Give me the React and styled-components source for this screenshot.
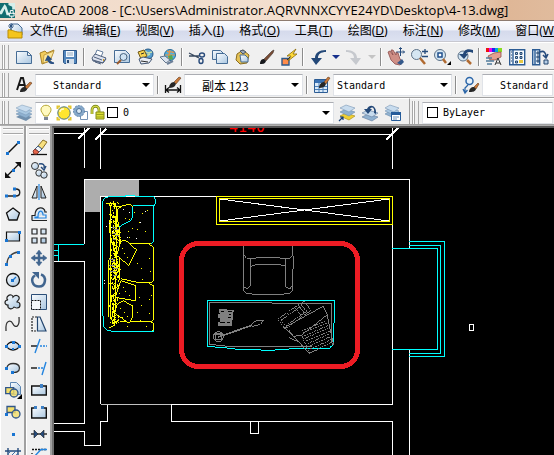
import React from "react";
import styled, { createGlobalStyle } from "styled-components";

const GlobalStyle = createGlobalStyle`
  body {
    margin: 0;
    background: #000;
  }
  * {
    box-sizing: border-box;
  }
`;

const Window = styled.div`
  display: flex;
  flex-direction: column;
  height: 100vh;
  overflow: hidden;
  background: #f0f0f0;
  color: #000;
  font-family: "Noto Sans", "Noto Sans CJK SC", sans-serif;
  font-size: 12px;
`;

const TitleBar = styled.header`
  display: flex;
  align-items: center;
  gap: 6px;
  flex: none;
  height: 21px;
  overflow: hidden;
  background: linear-gradient(90deg, #f1dccb 0%, #f3dfcf 60%, #eccfb8 84%, #dfb797 92%, #e0bb9d 100%);
  border-bottom: 1px solid #8d7b70;
`;

const Title = styled.h1`
  margin: 0;
  font-family: "Open Sans", sans-serif;
  font-size: 13px;
  font-weight: normal;
  line-height: 20px;
  white-space: nowrap;
`;

const MenuBar = styled.nav`
  display: flex;
  align-items: center;
  flex: none;
  height: 21px;
  padding-left: 7px;
  overflow: hidden;
  background: linear-gradient(#fdfdff 0%, #eef0f8 45%, #d5daec 50%, #dde2f1 100%);
  border-bottom: 1px solid #c8c8d0;
`;

const MenuButton = styled.button`
  flex: none;
  padding: 0 8px 0 7px;
  border: 0;
  background: none;
  font: inherit;
  line-height: 20px;
  color: #000;
  white-space: nowrap;
`;

const ToolBar = styled.div`
  display: flex;
  align-items: center;
  flex: ${(p) => (p.$grow ? 1 : "none")};
  width: ${(p) => (p.$width ? p.$width + "px" : "auto")};
  height: ${(p) => p.$height || 27}px;
  padding-top: 2px;
  overflow: hidden;
  border-top: 1px solid #fff;
  border-bottom: 1px solid #a0a0a0;
  border-right: ${(p) => (p.$width ? "1px solid #a0a0a0" : "0")};
`;

const ToolRow = styled.div`
  display: flex;
  flex: none;
`;

const Grip = styled.div`
  flex: none;
  width: 7px;
  height: 24px;
  margin: 0 3px 0 2px;
  border: solid #a8a8a8;
  border-width: 0 1px;
  box-shadow: inset 1px 0 #fff, inset -3px 0 #f0f0f0, inset -4px 0 #a8a8a8;
`;

const Divider = styled.div`
  flex: none;
  width: 2px;
  height: 18px;
  margin: 0 2px;
  border-left: 1px solid #8c8c8c;
  border-right: 1px solid #fff;
`;

const ToolButton = styled.button`
  display: flex;
  align-items: center;
  justify-content: center;
  flex: none;
  width: ${(p) => p.$width || 23}px;
  height: 22px;
  padding: 0;
  border: 0;
  background: none;
`;

const Icon = styled.svg`
  display: block;
  flex: none;
  width: ${(p) => p.$size || 16}px;
  height: ${(p) => p.$size || 16}px;
  overflow: visible;
`;

const Combo = styled.div`
  display: flex;
  align-items: center;
  gap: 1px;
  flex: ${(p) => (p.$width ? "none" : 1)};
  width: ${(p) => (p.$width ? p.$width + "px" : "auto")};
  min-width: 0;
  height: 22px;
  padding: 0 3px 0 ${(p) => p.$indent}px;
  margin-right: 1px;
  overflow: hidden;
  background: #fff;
  border: solid #e0e3e8;
  border-width: 1px;
  border-top-color: #abadb3;
`;

const Select = styled.select`
  appearance: none;
  flex: 1;
  min-width: 0;
  height: 20px;
  padding: 0;
  border: 0;
  outline: 0;
  background: transparent;
  color: #000;
  font-family: ${(p) => (p.$cjk ? `"Noto Sans CJK SC", sans-serif` : `"DejaVu Sans Mono", monospace`)};
  font-size: ${(p) => (p.$cjk ? 12 : 10)}px;
`;

const Arrow = styled.span`
  flex: none;
  border: solid transparent;
  border-width: 4px 4px 0;
  border-top-color: ${(p) => p.$color || "#000"};
`;

const Swatch = styled.span`
  flex: none;
  width: 11px;
  height: 11px;
  margin-right: 4px;
  border: 1px solid #000;
  background: #fff;
`;

const Workspace = styled.main`
  display: flex;
  flex: 1;
  min-height: 0;
  border-top: 1px solid #b0b0b0;
`;

const Palette = styled.div`
  display: flex;
  flex-direction: column;
  align-items: center;
  flex: none;
  width: 26px;
  overflow: hidden;
  padding-top: 2px;
  border-right: 2px solid #a0a0a0;
  border-left: 1px solid #fff;
`;

const PaletteGrip = styled.div`
  flex: none;
  width: 20px;
  height: 6px;
  margin-bottom: 3px;
  border: solid #a8a8a8;
  border-width: 1px 0;
  box-shadow: inset 0 1px #fff, 0 1px #fff;
`;

const Canvas = styled.div`
  flex: 1;
  min-width: 0;
  background: #000;
  border-left: 2px solid #707070;
  border-top: 2px solid #555;
`;

const Drawing = styled.svg`
  display: block;
  width: 100%;
  height: 100%;
`;

// 16 x 16 drawings, keyed by command
const icons = {
  app: (
    <>
      <path d="M0 0h16v16H0z" fill="#116d70" />
      <path d="M0 9 5 1l2 3 3 9H7L5 6 2 12H0zM9 0h7v7h-3V4L9 2z" fill="#d7efea" />
      <path d="M8 11h3V8h3v3h2M12.500 14v2M10 11h5v3h-5z" fill="none" stroke="#fff" />
    </>
  ),
  doc: (
    <>
      <path d="M4 1h7l4 4v7H4z" fill="url(#paper)" stroke="#456b95" />
      <path d="M1 7c4-1 7 3 14 2v6H1z" fill="#f4c51c" stroke="#b98b05" />
      <path d="M4 0v7M1 3h6M2 1l4 4M2 5l4-4" stroke="#244c7b" strokeWidth=".8" />
    </>
  ),
  new: <path d="M.5 2.500h11l4 4v8H.5zM11.500 2.500v4h4" fill="url(#paper)" stroke="#466d96" />,
  open: (
    <>
      <path d="M1 4 6 2l2 2 7-3-4 11-8 3z" fill="#f1cc5b" stroke="#a8842a" />
      <path d="M5 6 15 2l-4 10-7 2z" fill="#fbe69b" stroke="#b18b31" strokeWidth=".7" />
      <path d="M15 14c-4 1-6-1-6-4M7 11l2-4 3 3z" fill="#294f82" stroke="#294f82" strokeWidth="1.300" />
    </>
  ),
  save: (
    <>
      <path d="M1.500 1.500h13v13h-12l-1-1z" fill="#5387bd" stroke="#2c5688" />
      <path d="M4 2h8v6H4z" fill="#f5f9fd" />
      <path d="M4 10h8v5H4z" fill="#d6e0ea" />
      <path d="M5 4h6M5 6h6" stroke="#91a9c0" />
      <path d="M5 11h2v3H5z" fill="#2c4d76" />
    </>
  ),
  print: (
    <>
      <path d="m4 6 2-5 6 2-2 5z" fill="#fff" stroke="#67809f" />
      <path d="M1 9l3-4 11 4-3 5-10-2z" fill="#dde2ee" stroke="#50617d" />
      <path d="M2 11l10 3 3-4M3 8l8 3M4 13l6 2" fill="none" stroke="#50617d" />
      <path d="M12 11h1" stroke="#d29817" strokeWidth="2" />
    </>
  ),
  preview: (
    <>
      <path d="M.5 1.500h11l4 4v8H.5z" fill="url(#paper)" stroke="#466d96" />
      <circle cx="9.500" cy="8" r="3.500" fill="#cfe3f3" stroke="#47637f" />
      <path d="m7 11-4 4" stroke="#9b5b2b" strokeWidth="2" />
    </>
  ),
  publish: (
    <>
      <circle cx="11" cy="5" r="5" fill="#569ccd" stroke="#245784" />
      <path d="M8 2l3 2 4-1M9 7l4-2" stroke="#c5dfac" strokeWidth="1.500" fill="none" />
      <path d="M1 3l6-2 3 6-6 3z" fill="#f8d34f" stroke="#6e5516" />
      <path d="M2 10l4-2 9 2-3 4-8 1z" fill="#e9edf4" stroke="#425674" />
      <path d="M4 12l7 1M4 5l3-1" stroke="#2b2b2b" />
    </>
  ),
  dwf: (
    <>
      <circle cx="10" cy="6" r="5.500" fill="#4db1df" stroke="#2b6a98" />
      <path d="M7 2c3 3 5-1 7 2M10 1l-2 9M5 6h10" stroke="#f0913d" strokeWidth="1.200" fill="none" />
      <path d="M8 7l4-1 1 4-3 1z" fill="#58a94b" />
      <path d="m0 8 5-1 5 4-4 3z" fill="#dbe3ee" stroke="#64778e" />
      <path d="M7 15l6-3" stroke="#6c7f98" strokeWidth="2" />
    </>
  ),
  cut: (
    <>
      <path d="M0 4l10 5M0 7l10 0" stroke="#37485e" strokeWidth="1.300" />
      <ellipse cx="13" cy="6" rx="2.500" ry="2" fill="none" stroke="#284a7a" strokeWidth="1.400" />
      <ellipse cx="12" cy="12" rx="2" ry="2.500" fill="none" stroke="#284a7a" strokeWidth="1.400" />
    </>
  ),
  copy: (
    <>
      <path d="M.5 1.500h8l3 3v6H.5z" fill="url(#paper)" stroke="#466d96" />
      <path d="M4.500 4.500h8l3 3v7h-11z" fill="url(#paper)" stroke="#466d96" />
    </>
  ),
  paste: (
    <>
      <path d="M2 5 8 1l6 5-2 8-7 1-4-4z" fill="#e5c255" stroke="#8a6c20" />
      <path d="m5 2 3-1 3 2-3 2z" fill="#9aa9bb" stroke="#4b5665" />
      <path d="M5 6h5l3 3v4H6z" fill="url(#paper)" stroke="#466d96" />
    </>
  ),
  brush: (
    <>
      <path d="M6 10 14 2l2-1-1 3-7 8z" fill="#7a4c35" stroke="#443731" strokeWidth=".6" />
      <path d="M2 15c0-4 2-5 4-5l2 2c-1 3-3 3-6 3z" fill="#17191d" />
    </>
  ),
  blockEdit: (
    <>
      <path d="M1 9.500h7V16H1z" fill="#ff8b4a" stroke="#2e5889" strokeWidth="1.400" />
      <path d="M15 0 6 7l4 0-3 5 9-7h-4z" fill="#ffdb38" stroke="#8b6a0a" strokeWidth=".8" />
      <path d="m6 11 3-3" stroke="#333" />
    </>
  ),
  undo: (
    <path d="M16 1C9 1 5 4 5 9H1l5 7 6-7H8c0-4 3-6 8-6z" fill="#234878" />
  ),
  redo: (
    <path d="M0 1c7 0 11 3 11 8h4l-5 7-6-7h4c0-4-3-6-8-6z" fill="#c6c9ce" />
  ),
  pan: (
    <>
      <path d="M0 3l2-1 3 4-2-5 2 0 3 5 0-3 2 1 2 6 3 3-3 3-5-1-4-4z" fill="#cf8f86" stroke="#8b4c4b" strokeWidth=".8" />
      <path d="M9 14l5-4 2 3-3 3z" fill="#34598b" />
      <path d="M12.500-1v8M8.500 3h8M11 0l1.500-1.500L14 0M15 1.500 16.500 3 15 4.500" stroke="#254b7c" fill="none" />
    </>
  ),
  zoomRealtime: (
    <>
      <circle cx="5.500" cy="5.500" r="5" fill="#d5e6f2" stroke="#5c7187" />
      <path d="m9 9 5 6" stroke="#b06a31" strokeWidth="2.500" />
      <path d="M11 2.500h6M14 0v5M11 7.500h6" stroke="#254b7c" strokeWidth="1.300" />
    </>
  ),
  zoomWindow: (
    <>
      <circle cx="6" cy="6" r="5.500" fill="#d5e6f2" stroke="#5c7187" />
      <path d="M4 4h4v4H4z" fill="#fff" stroke="#1f4f8c" strokeWidth="1.500" />
      <path d="m9 10 3 4" stroke="#b06a31" strokeWidth="2.500" />
      <path d="M17 12v4h-4z" />
    </>
  ),
  zoomPrevious: (
    <>
      <circle cx="6" cy="7" r="5" fill="#d5e6f2" stroke="#5c7187" />
      <path d="m10 11 4 4" stroke="#b06a31" strokeWidth="2.500" />
      <path d="M16 1C9-1 7 2 6 5H2l5 5 4-5H9c1-2 3-3 7-1z" fill="#234878" />
    </>
  ),
  properties: (
    <>
      <path d="M0-1h3v4H0z" fill="#e11" />
      <path d="M3-1h3v4H3z" fill="#e0e" />
      <path d="M6-1h3v4H6z" fill="#22e" />
      <path d="M9-1h3v4H9z" fill="#0ad" />
      <path d="M12-1h4v4h-4z" fill="#8d2" />
      <path d="m2 7 6-3 7-1v5l-6 3-5 0z" fill="#e4a090" stroke="#914f47" strokeWidth=".8" />
      <path d="M0 9h6M0 12h8M1 15h5" stroke="#507b9b" strokeWidth="1.500" />
      <path d="m9 16 3-7 3 7M10 14h4" fill="none" stroke="#333" />
    </>
  ),
  designCenter: (
    <>
      <path d="M.7.7h15v15H.7zM4 1v14" fill="#f7fbff" stroke="#2c5c94" strokeWidth="1.400" />
      <path d="M6.500 3.500h2v2h-2zM11 3.500h2v2h-2zM6.500 7.500h2v2h-2zM11 7.500h2v2h-2zM6.500 12h2v2h-2z" fill="#aac9e6" stroke="#24476f" />
      <path d="M10 11h4v3h-4z" fill="#e7c842" />
      <path d="M2 3h1M2 6h1M2 9h1M2 12h1" stroke="#24476f" />
    </>
  ),
  toolPalettes: (
    <>
      <path d="M.7.7h7v15h-7zM3 1v14" fill="#e5f0fa" stroke="#2c5c94" strokeWidth="1.400" />
      <path d="M5 3h2v2H5zM5 7h2v2H5zM5 11h2v2H5zM12 11h4v4h-4z" fill="#b8cfe7" stroke="#24476f" />
      <path d="M8 3c4-2 6 1 6 5M11 6l3 3 2-4" fill="none" stroke="#254b7c" strokeWidth="1.600" />
    </>
  ),
  textStyle: (
    <>
      <path d="m1 13 4-12h2l3 12M2 8h7" fill="none" stroke="#171717" strokeWidth="1.900" />
      <path d="m9 10 5-5 2 1-5 6z" fill="#c87838" stroke="#643a1d" strokeWidth=".6" />
      <path d="M4 15c0-3 2-5 5-5l2 2c-1 3-4 3-7 3z" fill="#272727" />
    </>
  ),
  dimStyle: (
    <>
      <path d="M.5 8v8M15.500 8v8M1 13h14M4 10.500 1 13l3 2.500M12 10.500l3 2.500-3 2.500" fill="none" stroke="#111" strokeWidth="1.300" />
      <path d="m9 5 5-5 2 1-5 6z" fill="#c87838" stroke="#643a1d" strokeWidth=".6" />
      <path d="M4 11c0-3 2-6 5-6l2 2c-1 3-4 4-7 4z" fill="#272727" />
    </>
  ),
  tableStyle: (
    <>
      <path d="M.5 2.500h13v13H.5z" fill="#dbeaf8" stroke="#2c5c94" />
      <path d="M1 3h12v3H1z" fill="#3a72b4" />
      <path d="M1 9.500h12M1 12.500h12M5 6v9M9 6v9" stroke="#4b7fb8" />
      <path d="m10 5 4-5 2 1-4 6z" fill="#c87838" stroke="#643a1d" strokeWidth=".6" />
      <path d="M5 11c0-3 2-6 5-6l2 2c-1 3-4 4-7 4z" fill="#272727" />
    </>
  ),
  leaderStyle: (
    <>
      <circle cx="6.500" cy="4" r="3.500" fill="#e8f2fb" stroke="#2c66a8" strokeWidth="1.500" />
      <path d="M5 8 2 11v4M0 12l2 4 2.500-3" fill="none" stroke="#2c66a8" strokeWidth="1.300" />
      <path d="m11 10 4-4 1 1-3 5z" fill="#c87838" stroke="#643a1d" strokeWidth=".6" />
      <path d="M6 15c0-3 2-5 5-5l2 2c-1 3-4 3-7 3z" fill="#272727" />
    </>
  ),
  layers: (
    <>
      <path d="m0 12 6-3 10 3-6 4z" fill="#7290ad" />
      <path d="m0 9 6-3 10 3-6 4z" fill="#8fb1d0" stroke="#6b8dad" strokeWidth=".5" />
      <path d="m0 6 6-3 10 3-6 4z" fill="#a9c8e2" stroke="#7896b4" strokeWidth=".5" />
      <path d="M0 3 6 0l10 3-6 4z" fill="#c8dcee" stroke="#7896b4" strokeWidth=".5" />
    </>
  ),
  bulb: (
    <>
      <path d="M5 11C4 8 1.500 7 2 4c1-5 9-5 10 0 .5 3-2 4-3 7z" fill="#fffac0" stroke="#b9a936" />
      <path d="M5 12h4v3H5z" fill="#7b8694" />
    </>
  ),
  sun: (
    <>
      <path d="M1.500 4V1.500H4M12 1.500h2.500V4M14.500 12v2.500H12M4 14.500H1.500V12" fill="none" stroke="#e2c52e" strokeWidth="2" />
      <circle cx="8" cy="8" r="6.200" fill="#ffe52f" stroke="#4c7480" />
      <path d="M4 7c0-2 2-3 4-3" fill="none" stroke="#fffbd0" strokeWidth="1.500" />
    </>
  ),
  freeze: (
    <>
      <path d="M7.500 6.500h7v8h-7z" fill="#fff" stroke="#7592b6" />
      <circle cx="6" cy="6" r="5.500" fill="#87a9cb" stroke="#5f86ac" strokeDasharray="2 1" />
      <circle cx="6" cy="6" r="2.500" fill="#dceaf5" stroke="#4c7095" />
    </>
  ),
  lock: (
    <>
      <path d="M2 9V5c0-5 7-5 7 0v3" fill="none" stroke="#7e8b1c" strokeWidth="2.800" />
      <path d="M2 9V5c0-5 7-5 7 0v3" fill="none" stroke="#dce04e" strokeWidth="1.200" />
      <path d="M6 7h8v7H6z" fill="#d9dc34" stroke="#838a16" />
      <path d="M6 9.500h8M6 12h8" stroke="#9aa01d" />
    </>
  ),
  layerCurrent: (
    <>
      <path d="m1 11 6-3 9 3-6 4z" fill="#efcf32" stroke="#a5870e" strokeWidth=".6" />
      <path d="m1 7 6-3 9 3-6 4z" fill="#8fb1d0" stroke="#6b8dad" strokeWidth=".6" />
      <path d="M1 3 7 0l9 3-6 4z" fill="#c8dcee" stroke="#7896b4" strokeWidth=".6" />
      <path d="m0 16 4-4M1 12h3v3" fill="none" stroke="#173f78" strokeWidth="1.200" />
    </>
  ),
  layerPrevious: (
    <>
      <path d="m0 12 6-3 10 3-6 4z" fill="#8fb1d0" stroke="#60799a" strokeWidth=".6" />
      <path d="m0 8 6-3 10 3-6 4z" fill="#c8dcee" stroke="#60799a" strokeWidth=".6" />
      <path d="M14 9C15 1 8-2 5 4H2l4 5 4-5H8c2-3 5-1 4 4z" fill="#234878" />
    </>
  ),
  layerStates: (
    <>
      <path d="m0 9 5-3 9 3-5 4z" fill="#8fb1d0" stroke="#6b8dad" strokeWidth=".6" />
      <path d="m0 6 5-3 9 3-5 4z" fill="#a9c8e2" stroke="#7896b4" strokeWidth=".6" />
      <path d="m0 3 5-3 9 3-5 4z" fill="#c8dcee" stroke="#7896b4" strokeWidth=".6" />
      <path d="M6.500 7.500h9v8h-9z" fill="#fff" stroke="#245b9a" />
      <path d="M6 7h10v3H6z" fill="#245b9a" />
      <path d="M8 12h6M8 14h4" stroke="#6f93ba" />
    </>
  ),
  line: (
    <>
      <path d="M3 13 13 3" stroke="#111" strokeWidth="1.400" />
      <path d="M1 12h3v3H1zM12 1h3v3h-3z" fill="#1975d2" />
    </>
  ),
  xline: (
    <>
      <path d="M1 15 15 1" fill="none" stroke="#111" strokeWidth="1.300" />
      <path d="M0 16v-6l6 6zM16 0v6l-6-6z" fill="#111" />
      <path d="M7 7h3v3H7z" fill="#1975d2" />
    </>
  ),
  pline: (
    <>
      <path d="M1 12h10c5 0 5-7 0-7" fill="none" stroke="#222" strokeWidth="1.400" />
      <path d="M0 10.500h3v3H0zM8 10.500h3v3H8zM8 3.500h3v3H8z" fill="#1975d2" />
    </>
  ),
  polygon: <path d="m8 2 6.500 5-2.500 7H4L1.500 7z" fill="url(#paper)" stroke="#111" strokeWidth="1.300" />,
  rectangle: (
    <>
      <path d="M1.500 4h13v9h-13z" fill="url(#paper)" stroke="#111" strokeWidth="1.200" />
      <path d="M0 11h3v3H0zM13 3h3v3h-3z" fill="#1975d2" />
    </>
  ),
  arc: (
    <>
      <path d="M2 14C2 8 6 3 13 2" fill="none" stroke="#444" strokeWidth="1.300" />
      <path d="M0 13h3v3H0zM4 5h3v3H4zM12 1h3v3h-3z" fill="#1975d2" />
    </>
  ),
  circle: (
    <>
      <circle cx="8" cy="8" r="6.500" fill="url(#paper)" stroke="#111" strokeWidth="1.300" />
      <path d="m8 8 3-3" stroke="#1975d2" strokeWidth="1.300" />
      <path d="M6 7h3v3H6z" fill="#1975d2" />
    </>
  ),
  cloud: (
    <path d="M3 2c2-2 5-1 5 1 3-3 7-1 6 2-1 2-2 2-2 3 4 0 4 6 0 6-2 0-2-1-3-1-2 3-7 2-6-2-4 0-4-5 0-5-2-1-1-3 0-4z" fill="url(#paper)" stroke="#222" strokeWidth="1.200" />
  ),
  spline: <path d="M1 15C0 3 6 4 8 8s7 4 6-7" fill="none" stroke="#333" strokeWidth="1.300" />,
  ellipse: (
    <>
      <ellipse cx="8" cy="8" rx="6" ry="4" fill="url(#paper)" stroke="#111" strokeWidth="1.300" />
      <path d="M0 7h3v3H0zM13 7h3v3h-3zM7 3h3v3H7zM7 10h2v2H7z" fill="#1975d2" />
    </>
  ),
  ellipseArc: (
    <>
      <path d="M2 8C2 2 14 2 14.500 8c0 4-4 5-7 4" fill="url(#paper)" stroke="#333" strokeWidth="1.300" />
      <path d="M0 7h3v3H0zM6 11h3v3H6z" fill="#1975d2" />
    </>
  ),
  insertBlock: (
    <>
      <path d="M5.500.5h6l4 4v8h-10z" fill="url(#paper)" stroke="#5c86b2" />
      <path d="M.7 5.700h8v6h-8z" fill="#f4df69" stroke="#30568a" strokeWidth="1.300" />
      <circle cx="9" cy="11" r="4" fill="#f4df69" fillOpacity=".8" stroke="#30568a" strokeWidth="1.300" />
      <path d="M17 12v5h-5z" />
    </>
  ),
  makeBlock: (
    <>
      <path d="M2 2.500h8v6H2z" fill="#f4df69" stroke="#30568a" strokeWidth="1.300" />
      <circle cx="11" cy="10" r="4" fill="#f4df69" fillOpacity=".8" stroke="#30568a" strokeWidth="1.300" />
      <path d="M0 9h3v3H0z" fill="#1975d2" />
    </>
  ),
  point: <path d="M7 7h3v3H7z" fill="#1975d2" />,
  hatch: (
    <>
      <path d="M3 0v16M13 0v16M0 3h16M0 13h16" stroke="#254b7c" strokeWidth="1.400" />
      <path d="m3 6 3-3M3 11l8-8M7 12l6-7M11 12l2-2" stroke="#3f6fa8" />
    </>
  ),
  erase: (
    <>
      <path d="M0 14.500h16" stroke="#111" strokeWidth="1.300" />
      <path d="m7 6 5-6 4 2-5 7z" fill="#f7df7d" stroke="#866e26" />
      <path d="m4 9 3-3 4 3-3 3z" fill="#eef3f8" stroke="#405d83" />
      <path d="m2 11 2-2 4 3-2 2H3z" fill="#e56549" stroke="#863b31" />
    </>
  ),
  copyObject: (
    <>
      <circle cx="4" cy="4" r="3.500" fill="url(#paper)" stroke="#333" />
      <circle cx="8" cy="11" r="3.200" fill="url(#paper)" stroke="#333" />
      <circle cx="13" cy="13" r="3.200" fill="url(#paper)" stroke="#333" />
      <path d="M8 2c4-1 6 1 5 4M10 5l3 3 2-4" fill="none" stroke="#254b7c" strokeWidth="1.500" />
    </>
  ),
  mirror: (
    <>
      <path d="M6 2v12H1zM10 2v12h5z" fill="url(#paper)" stroke="#222" />
      <path d="M8 0v16" stroke="#2384df" strokeWidth="1.200" />
    </>
  ),
  offset: (
    <>
      <path d="M1 14.500v-5h3C4 0 14 0 14 6h2M1 14.500h15" fill="url(#paper)" stroke="#222" strokeWidth="1.200" />
      <path d="M4 12v-1h3c0-8 5-7 5-2h3v3z" fill="none" stroke="#2384df" strokeWidth="1.200" />
    </>
  ),
  array: <path d="M1 1h5v5H1zM10 1h5v5h-5zM1 10h5v5H1zM10 10h5v5h-5z" fill="url(#paper)" stroke="#222" strokeWidth="1.200" />,
  move: (
    <path d="M8 0 5 4h2v3H4V5L0 8l4 3V9h3v3H5l3 4 3-4H9V9h3v2l4-3-4-3v2H9V4h2z" fill="#41658f" stroke="#41658f" strokeWidth=".5" />
  ),
  rotate: (
    <>
      <path d="M10 2.500c6 2 5 12-2 12s-9-8-4-11" fill="none" stroke="#41658f" strokeWidth="2.500" />
      <path d="M1 0h7v7z" fill="#41658f" />
    </>
  ),
  scale: (
    <>
      <path d="M.5.500h15v15H.5z" fill="url(#paper)" stroke="#2b4e78" />
      <path d="M.5 6.500h9v9h-9z" fill="#f4f7fa" stroke="#111" strokeDasharray="2 1" />
    </>
  ),
  stretch: (
    <>
      <path d="M6.500 1v14H15L9 1z" fill="url(#paper)" stroke="#23456d" strokeWidth="1.200" />
      <path d="M6 1H1v14h5" fill="none" stroke="#222" strokeWidth="1.200" strokeDasharray="2 1" />
    </>
  ),
  trim: (
    <>
      <path d="M0 8h6" stroke="#111" strokeWidth="1.400" />
      <path d="m4 15 5-14M9 8h2M12 8h2M15 8h1" stroke="#2384df" strokeWidth="1.400" />
    </>
  ),
  extend: (
    <>
      <path d="M0 8h6" stroke="#111" strokeWidth="1.400" />
      <path d="M7 8h2M10 8h2M11 15l4-13" stroke="#2384df" strokeWidth="1.400" />
    </>
  ),
  breakAtPoint: (
    <>
      <path d="M.7 4h14.600v9H.7z" fill="url(#paper)" stroke="#111" strokeWidth="1.400" />
      <path d="M9 2h3v4H9z" fill="#3d7fc4" />
    </>
  ),
  breakLine: (
    <>
      <path d="M4 4H.7v10h14.600V4H12" fill="url(#paper)" stroke="#111" strokeWidth="1.400" />
      <path d="M3 2h3v3H3zM10 2h3v3h-3z" fill="#3d7fc4" />
    </>
  ),
  join: (
    <>
      <path d="M0 8h16" stroke="#111" strokeWidth="1.300" />
      <path d="m3 4 4 4-4 4zM13 4 9 8l4 4z" fill="#254b7c" stroke="#222" strokeWidth=".6" />
    </>
  ),
  chamfer: (
    <>
      <path d="M1 15V5M1 1.500h15" stroke="#111" strokeWidth="1.300" strokeDasharray="2 1" />
      <path d="m1 11 9-9.500h6" fill="none" stroke="#2384df" strokeWidth="1.400" />
    </>
  ),
};

const Glyph = ({ name, size }) => (
  <Icon viewBox="0 0 16 16" $size={size} aria-hidden="true">
    {icons[name]}
  </Icon>
);

const menus = [
  ["文件", "F"],
  ["编辑", "E"],
  ["视图", "V"],
  ["插入", "I"],
  ["格式", "O"],
  ["工具", "T"],
  ["绘图", "D"],
  ["标注", "N"],
  ["修改", "M"],
  ["窗口", "W"],
];

const standardTools = [
  "new", "open", "save", "|",
  "print", "preview", "publish", "dwf", "|",
  "cut", "copy", "paste", "brush", "blockEdit", "|",
  "undo", "v", "redo", "v-off", "|",
  "pan", "zoomRealtime", "zoomWindow", "zoomPrevious", "|",
  "properties", "designCenter", "toolPalettes",
];

const drawTools = [
  "line", "xline", "pline", "polygon", "rectangle", "arc", "circle", "cloud",
  "spline", "ellipse", "ellipseArc", "insertBlock", "makeBlock", "point", "hatch",
];

const modifyTools = [
  "erase", "copyObject", "mirror", "offset", "array", "move", "rotate", "scale",
  "stretch", "trim", "extend", "breakAtPoint", "breakLine", "join", "chamfer",
];

const styleBoxes = [
  { icon: "textStyle", value: "Standard", indent: 17, width: 119 },
  { icon: "dimStyle", value: "副本 123", indent: 17, width: 119, cjk: true },
  { icon: "tableStyle", value: "Standard", indent: 3, width: 119 },
  { icon: "leaderStyle", value: "Standard", indent: 17 },
];

const StyleBox = ({ icon, value, indent, width, cjk }) => (
  <>
    <ToolButton aria-label={icon}>
      <Glyph name={icon} />
    </ToolButton>
    <Combo $width={width} $indent={indent}>
      <Select aria-label={icon} $cjk={cjk} defaultValue={value}>
        <option>{value}</option>
      </Select>
      {width && <Arrow />}
    </Combo>
    {width && <Divider />}
  </>
);

const StandardTool = ({ name }) => {
  if (name === "|") return <Divider />;
  if (name[0] === "v") {
    return (
      <ToolButton $width={13} aria-label="history">
        <Arrow $color={name === "v" ? "#16308c" : "#c4c4c4"} />
      </ToolButton>
    );
  }
  return (
    <ToolButton aria-label={name}>
      <Glyph name={name} />
    </ToolButton>
  );
};

const ToolPalette = ({ tools }) => (
  <Palette>
    <PaletteGrip />
    {tools.map((name) => (
      <ToolButton key={name} aria-label={name}>
        <Glyph name={name} />
      </ToolButton>
    ))}
  </Palette>
);

const noise = (n) => {
  const v = Math.sin(n * 12.9898) * 43758.5453;
  return v - Math.floor(v);
};

// fabric grain on the sofa back, snapped to a grid of 3
const grain = Array.from({ length: 380 }, (_, i) => {
  const spread = (noise(i) + noise(i + 500)) / 2;
  const x = 87 + Math.floor(spread * 12) * 3;
  const y = 97 + Math.floor(noise(i + 1000) * 121) * 3;
  return noise(i + 2000) > 0.5 ? `M${x} ${y}h3` : `M${x + 1} ${y}v6`;
}).join("");

const speckles =
  "M135 145h3M148 150h3M163 128h3M186 130h3M177 158h3M155 175h3M143 185h3M146 202h3M168 205h3M200 122h3M194 186h3M170 180h3" +
  "M208 266h3M184 295h3M210 305h3M172 282h3M187 328h3M212 376h3M178 382h3M206 388h3M184 408h3M172 428h3M208 432h3M180 452h3M150 340h3M146 378h3M198 470h3M140 470h3";

const Sofa = () => (
  <g transform="translate(80 170) scale(.33333)" fill="none" strokeWidth="3">
    <path stroke="#0ff" d="M67 95V435L72 445V470L80 480 96 484H222V478M67 95 75 84 90 79H138V76H165V79H220L226 88V100L222 108H160M222 108V214L214 222" />
    <path stroke="#ff0" d="M120 222H205L214 218M206 222 222 232V328L214 338H176L122 326M206 340 222 348V445L214 456H120M214 456 222 462V476L216 484" />
    <path stroke="#ff0" d={grain} />
    <path stroke="#ff0" d="M78 100H100V92M100 110H130L152 103 158 110M92 106V440L104 466 88 474M88 150V190M86 270V440M119 170V330M110 112V220L104 460" />
    <path stroke="#ff0" fill="#000" d="M112 150 114 116 130 106 152 103 158 110V140L152 152 118 170z" />
    <path stroke="#0ff" d="M118 170 152 152 158 140V110" />
    <path stroke="#ff0" fill="#000" d="M122 214 136 210 170 240 146 286 110 256zM122 332 166 346V392L106 382zM110 404 130 392 158 408V440L148 460 104 430z" />
    <path stroke="#888" d="M96 172h12M102 180h15M99 190h9M105 198h12M99 208h9M88 268h18M94 276h12M86 286h21M98 296h15M90 306h18M98 318h12" />
    <path stroke="#ff0" d={speckles} />
    <path stroke="#ff0" d="M126 236h3M132 252h3M140 262h3M128 352h3M136 364h3M118 372h3M120 416h3M132 428h3M140 440h3M126 444h3" />
    <path stroke="#fff" d="M148 128h3M180 158h3M142 202h3M168 205h3M92 148h3M92 172h3M78 170h3M72 332h3M72 340h3M130 120h3M194 124h3M88 160h3M96 184h3M90 196h3" />
  </g>
);

const Furniture = () => (
  <g transform="translate(175 235) scale(.33333)" fill="none" stroke="#808080" strokeWidth="3">
    <path d="M206 34V168L215 175 240 178H320L345 175 352 168V110L355 100V66L352 60V34M206 60 215 70 226 72V154L216 161 206 156M226 72 250 68H310L332 72 345 70 352 62M332 72V156L344 162 352 152M228 94 246 88H312L332 94" />
    <path d="M103 328V202H290V205H470V322L474 330M103 328 180 336H410" />
    <path stroke="#0ff" d="M97 196H479V264H476V328L466 336 464 340H418L304 343 300 346H257V343H180V340H155V337H120V334H97z" />
    <path fill="#808080" stroke="none" d="M132 222H156V226H176L170 274H128V262H135V250H129V238H134z" />
    <path stroke="#000" d="M158 231H170M161 240H168M159 248H167M156 262H166M135 264H150M138 230H147" />
    <circle cx="130" cy="305" r="15" />
    <path d="M120 295H140V315H122zM116 300H145" />
    <path strokeWidth="5" d="M130 306 228 272" />
    <path d="M228 270 242 258 266 256 256 268 232 274z" />
    <path d="M308 252 388 198 408 226 330 282zM318 256 380 212 394 230 332 272zM360 218 384 250M370 210 392 240M376 206 400 234" strokeDasharray="6 2" />
    <path d="M328 278 444 214 456 236 460 258 476 330M328 278 356 304 404 356M340 284 356 304 380 300 456 240M342 308 370 320 402 354 428 344" />
    <path d="M380 300 402 352M380 288 452 258M384 294 456 264M388 302 458 272M390 310 460 280M394 318 464 288M398 326 466 296M402 334 468 304M406 342 472 312M412 350 474 320" strokeDasharray="5 3" />
  </g>
);

const FloorPlan = () => (
  <Drawing role="img" aria-label="4-13.dwg" shapeRendering="crispEdges">
    {/* view origin of the drawing */}
    <g transform="translate(-54 -128)" fill="none" stroke="#fff">
      <path stroke="none" fill="#adadad" d="M85 180H139V196H100V212H85z" />
      <path d="M54 133.500H84M84.500 128V168M100.500 128V169M100 134.500H392M392.500 128V169" />
      <path strokeWidth="2" d="M78 139 89 128M95 140 106 129M386 140 398 128" />
      <text x="229" y="132" fill="#f00" stroke="none" fontFamily="DejaVu Sans Mono, monospace" fontSize="15">
        4140
      </text>

      <path d="M84.500 244V179.500H409.500V248M54 261.500H84.500V423.500H54M54 431.500H84.500V445.500H100.500V421.500H107.500V404" />
      <path d="M100.500 404V196.500H392.500V404.500H171.500V421.500H392.500V455M250.500 421V433.500H258.500V421M409.500 349V455" />
      <path stroke="#c0c0c0" d="M101 404.500H171" />

      <path stroke="#0ff" d="M54 244.500H84M54 250.500H58M58.500 244V261M54 255.500H58" />
      <path stroke="#0ff" d="M392 248.500H437.500V349.500H392M409 245.500H440.500V353.500H409M409 241.500H444.500V356.500H409" />

      <path stroke="#ff0" d="M216.500 196.500H392.500V224.500H216.500zM219.500 198.500H389.500V221.500H219.500z" />
      <path d="M220 199 389 221M220 221 389 199" />

      <Sofa />
      <Furniture />
      <path d="M469.500 324.500H473.500V330.500H469.500z" />
      <rect x="181.500" y="243.500" width="176" height="123" rx="17" stroke="#ed1c24" strokeWidth="5" />
    </g>
  </Drawing>
);

const App = () => (
  <Window>
    <GlobalStyle />
    <TitleBar>
      <Icon viewBox="0 0 16 16" $size={15} aria-hidden="true">
        <defs>
          <linearGradient id="paper" x1="0" y1="0" x2="1" y2="1">
            <stop offset="0" stopColor="#fbfdff" />
            <stop offset="1" stopColor="#a9c6e0" />
          </linearGradient>
        </defs>
        {icons.app}
      </Icon>
      <Title>AutoCAD 2008 - [C:\Users\Administrator.AQRVNNXCYYE24YD\Desktop\4-13.dwg]</Title>
    </TitleBar>

    <MenuBar>
      <Glyph name="doc" />
      {menus.map(([label, key]) => (
        <MenuButton key={key}>
          {label}(<u>{key}</u>)
        </MenuButton>
      ))}
    </MenuBar>

    <ToolBar $height={28}>
      <Grip />
      {standardTools.map((name, i) => (
        <StandardTool key={i} name={name} />
      ))}
    </ToolBar>

    <ToolBar $height={28}>
      <Grip />
      {styleBoxes.map((box) => (
        <StyleBox key={box.icon} {...box} />
      ))}
    </ToolBar>

    <ToolRow>
      <ToolBar $width={410}>
        <Grip />
        <ToolButton aria-label="layers">
          <Glyph name="layers" />
        </ToolButton>
        <Combo $width={299} $indent={3}>
          <Glyph name="bulb" />
          <Glyph name="sun" />
          <Glyph name="freeze" />
          <Glyph name="lock" />
          <Swatch />
          <Select aria-label="layer" defaultValue="0">
            <option>0</option>
          </Select>
          <Arrow />
        </Combo>
        {["layerCurrent", "layerPrevious", "layerStates"].map((name) => (
          <ToolButton key={name} aria-label={name}>
            <Glyph name={name} />
          </ToolButton>
        ))}
      </ToolBar>
      <ToolBar $grow>
        <Grip />
        <Combo $indent={4}>
          <Swatch />
          <Select aria-label="color" defaultValue="ByLayer">
            <option>ByLayer</option>
          </Select>
        </Combo>
      </ToolBar>
    </ToolRow>

    <Workspace>
      <ToolPalette tools={drawTools} />
      <ToolPalette tools={modifyTools} />
      <Canvas>
        <FloorPlan />
      </Canvas>
    </Workspace>
  </Window>
);

export default App;
